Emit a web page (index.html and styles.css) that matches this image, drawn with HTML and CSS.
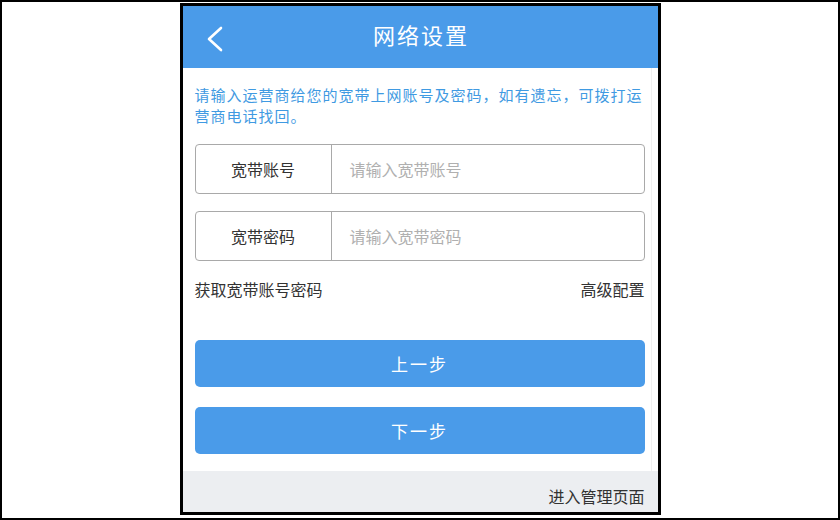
FILE: index.html
```html
<!DOCTYPE html>
<html lang="zh-CN">
<head>
    <meta charset="UTF-8">
    <meta name="viewport" content="width=device-width, initial-scale=1.0">
    <title>网络设置</title>
    <link rel="stylesheet" href="styles.css">
</head>
<body>
    <div class="frame">
        <div class="phone">
            <div class="header">
                <svg class="back" width="18" height="26" viewBox="0 0 18 26">
                    <polyline points="15,2 3,13 15,24" fill="none" stroke="#ffffff" stroke-width="2.6" stroke-linecap="round" stroke-linejoin="round"/>
                </svg>
                <div class="title">网络设置</div>
            </div>
            <div class="content">
                <p class="tip">请输入运营商给您的宽带上网账号及密码，如有遗忘，可拨打运营商电话找回。</p>
                <div class="field">
                    <div class="label">宽带账号</div>
                    <div class="placeholder">请输入宽带账号</div>
                </div>
                <div class="field">
                    <div class="label">宽带密码</div>
                    <div class="placeholder">请输入宽带密码</div>
                </div>
                <div class="links">
                    <span>获取宽带账号密码</span>
                    <span>高级配置</span>
                </div>
                <div class="btn first">上一步</div>
                <div class="btn">下一步</div>
            </div>
            <div class="footer">进入管理页面</div>
        </div>
    </div>
</body>
</html>
```

FILE: styles.css
```css
  body {
      margin: 0;
      font-family: "Noto Sans CJK SC", "Noto Sans", sans-serif;
      background: #ffffff;
  }
  .frame {
      width: 840px;
      height: 520px;
      box-sizing: border-box;
      border: 2px solid #000000;
      display: flex;
      justify-content: center;
      padding-top: 1px;
  }
  .phone {
      width: 481px;
      height: 512px;
      box-sizing: border-box;
      border: 3px solid #000000;
      background: #ffffff;
      display: flex;
      flex-direction: column;
  }
  .header {
      height: 62px;
      box-sizing: border-box;
      padding-bottom: 7px;
      background-color: #4a9be9;
      display: flex;
      align-items: center;
      justify-content: center;
      position: relative;
  }
  .back {
      position: absolute;
      left: 23px;
      top: 20px;
  }
  .title {
      color: #ffffff;
      font-size: 22px;
      letter-spacing: 2px;
      margin-right: -2px;
  }
  .content {
      flex: 1;
      padding: 0 6px 0 12px;
      margin-right: 6px;
      border-right: 1px solid #f0f0f0;
      display: flex;
      flex-direction: column;
  }
  .tip {
      margin: 16px 0 0;
      font-size: 15px;
      letter-spacing: 1px;
      line-height: 21px;
      color: #3f9ae2;
  }
  .field {
      margin-top: 18px;
      height: 50px;
      box-sizing: border-box;
      border: 1.5px solid #a9a9a9;
      border-radius: 4px;
      display: flex;
      align-items: center;
      font-size: 16px;
  }
  .field + .field {
      margin-top: 17px;
  }
  .label {
      width: 135px;
      height: 100%;
      border-right: 1.5px solid #a9a9a9;
      display: flex;
      align-items: center;
      justify-content: center;
      color: #333333;
  }
  .placeholder {
      padding-left: 18px;
      color: #b0b0b0;
  }
  .links {
      margin-top: 18px;
      display: flex;
      justify-content: space-between;
      font-size: 16px;
      line-height: 20px;
      color: #333333;
  }
  .btn {
      height: 47px;
      margin-top: 20px;
      background-color: #4a9be9;
      border-radius: 5px;
      color: #ffffff;
      font-size: 17px;
      letter-spacing: 2px;
      display: flex;
      align-items: center;
      justify-content: center;
  }
  .btn.first {
      margin-top: 41px;
  }
  .footer {
      height: 41px;
      background-color: #eceef1;
      box-sizing: border-box;
      padding: 15px 13px 0 0;
      text-align: right;
      font-size: 16px;
      line-height: 20px;
      color: #333333;
  }
```
